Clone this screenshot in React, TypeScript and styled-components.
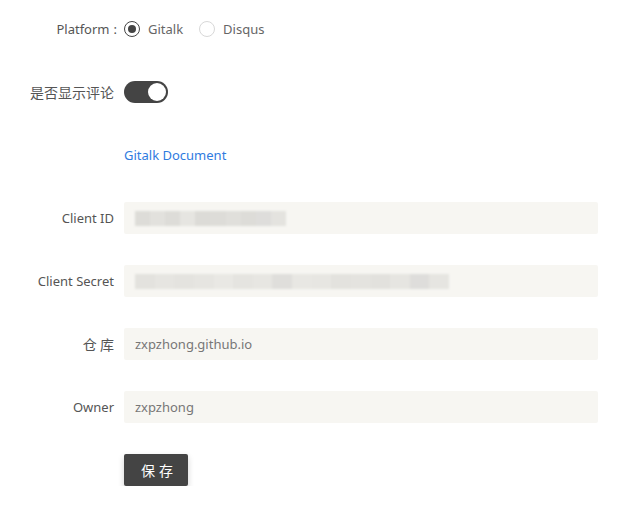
import React, { useState } from "react";
import styled, { createGlobalStyle } from "styled-components";

const Global = createGlobalStyle`
  html, body { margin: 0; padding: 0; background: #fff; }
  body { font-family: "Noto Sans", "Noto Sans CJK SC", sans-serif; }
  * { box-sizing: border-box; }
`;

const Form = styled.div`
  display: grid;
  grid-template-columns: 114px 474px;
  column-gap: 10px;
  row-gap: 31px;
  padding-top: 13px;
  font-size: 13px;
  color: #555;
`;

const Label = styled.div<{ $cjk?: boolean }>`
  height: 32px;
  display: flex;
  align-items: center;
  justify-content: flex-end;
  white-space: nowrap;
  color: #555;
  font-size: ${(p) => (p.$cjk ? "14px" : "13px")};
  font-family: ${(p) =>
    p.$cjk ? '"Noto Sans CJK SC", sans-serif' : '"Noto Sans", "Noto Sans CJK SC", sans-serif'};
`;

const Colon = styled.span`
  margin-left: 4px;
  margin-right: -3px;
`;

const Control = styled.div`
  height: 32px;
  display: flex;
  align-items: center;
`;

const RadioGroup = styled.div`
  display: flex;
  align-items: center;
`;

const RadioItem = styled.label`
  display: flex;
  align-items: center;
  margin-right: 16px;
  color: #666;
  cursor: pointer;
`;

const RadioCircle = styled.span<{ $checked?: boolean }>`
  width: 16px;
  height: 16px;
  border-radius: 50%;
  border: 1px solid ${(p) => (p.$checked ? "#444" : "#d8d8d8")};
  margin-right: 8px;
  display: inline-flex;
  align-items: center;
  justify-content: center;
  &::after {
    content: "";
    width: 8px;
    height: 8px;
    border-radius: 50%;
    background: #444;
    display: ${(p) => (p.$checked ? "block" : "none")};
  }
`;

const Switch = styled.button<{ $on: boolean }>`
  width: 44px;
  height: 22px;
  border-radius: 11px;
  border: none;
  padding: 0;
  background: ${(p) => (p.$on ? "#444" : "#ccc")};
  position: relative;
  cursor: pointer;
  &::after {
    content: "";
    position: absolute;
    top: 2px;
    left: ${(p) => (p.$on ? "24px" : "2px")};
    width: 18px;
    height: 18px;
    border-radius: 50%;
    background: #fff;
  }
`;

const Link = styled.a`
  color: #2f7bdf;
  text-decoration: none;
  font-size: 13px;
`;

const Input = styled.div`
  width: 474px;
  height: 32px;
  background: #f7f6f2;
  border-radius: 2px;
  display: flex;
  align-items: center;
  padding: 0 11px;
  color: #777;
  font-size: 13px;
  overflow: hidden;
`;

const Mosaic = styled.div<{ $w: number; $h: number }>`
  width: ${(p) => p.$w}px;
  height: ${(p) => p.$h}px;
  display: flex;
  filter: blur(1px);
`;

const Tile = styled.span<{ $shade: string }>`
  flex: 1;
  background: ${(p) => p.$shade};
`;

const SaveButton = styled.button`
  width: 64px;
  height: 32px;
  background: #444;
  color: #fff;
  border: none;
  border-radius: 2px;
  font-family: "Noto Sans CJK SC", sans-serif;
  font-size: 14px;
  letter-spacing: 4px;
  padding: 0 0 0 8px;
  text-align: left;
  padding-left: 17px;
  box-shadow: 0 3px 6px rgba(0, 0, 0, 0.18);
  cursor: pointer;
`;

const idShades = ["#dddcd8", "#e2e1dd", "#dddcd8", "#e6e5e1", "#dcdbd7", "#dddcd8", "#e0dfdb", "#dddcd8", "#dedddb", "#e4e3df"];
const secretShades = ["#e3e2de", "#e6e5e1", "#e4e3df", "#e6e5e1", "#e9e8e4", "#e5e4e0", "#e7e6e2", "#dfdedb", "#e8e7e3", "#e7e6e2", "#e3e2de", "#e4e3df", "#e2e1dd", "#e6e5e1", "#dedddb", "#e6e5e1"];

export default function App() {
  const [platform, setPlatform] = useState("gitalk");
  const [on, setOn] = useState(true);
  return (
    <>
      <Global />
      <Form>
        <Label>
          Platform<Colon>:</Colon>
        </Label>
        <Control>
          <RadioGroup>
            <RadioItem onClick={() => setPlatform("gitalk")}>
              <RadioCircle $checked={platform === "gitalk"} />
              Gitalk
            </RadioItem>
            <RadioItem onClick={() => setPlatform("disqus")}>
              <RadioCircle $checked={platform === "disqus"} />
              Disqus
            </RadioItem>
          </RadioGroup>
        </Control>

        <Label $cjk>是否显示评论</Label>
        <Control>
          <Switch $on={on} onClick={() => setOn(!on)} />
        </Control>

        <Label />
        <Control>
          <Link href="#">Gitalk Document</Link>
        </Control>

        <Label>Client ID</Label>
        <Control>
          <Input>
            <Mosaic $w={151} $h={15}>
              {idShades.map((s, i) => (
                <Tile key={i} $shade={s} />
              ))}
            </Mosaic>
          </Input>
        </Control>

        <Label>Client Secret</Label>
        <Control>
          <Input>
            <Mosaic $w={314} $h={15}>
              {secretShades.map((s, i) => (
                <Tile key={i} $shade={s} />
              ))}
            </Mosaic>
          </Input>
        </Control>

        <Label $cjk>仓 库</Label>
        <Control>
          <Input>zxpzhong.github.io</Input>
        </Control>

        <Label>Owner</Label>
        <Control>
          <Input>zxpzhong</Input>
        </Control>

        <Label />
        <Control>
          <SaveButton>保存</SaveButton>
        </Control>
      </Form>
    </>
  );
}
